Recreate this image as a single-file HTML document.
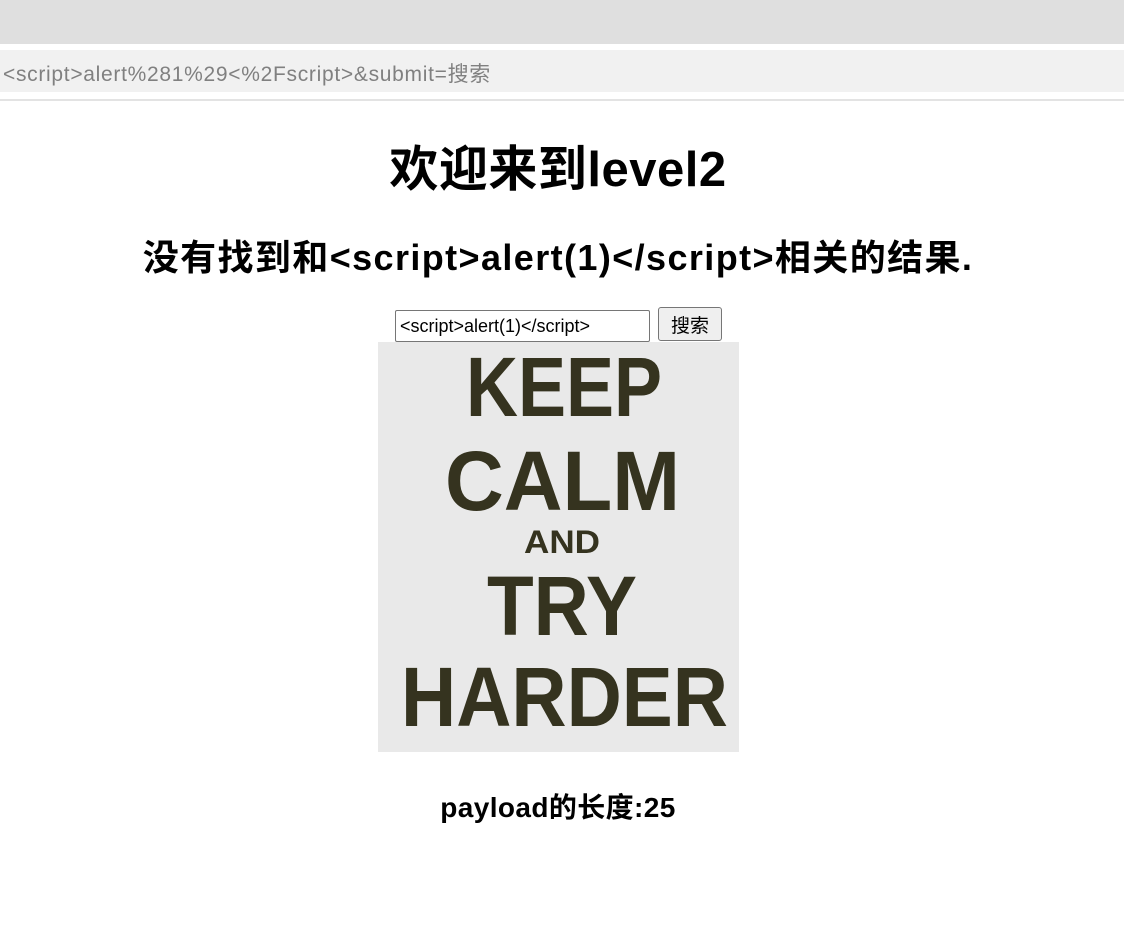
<!DOCTYPE html>
<html><head><meta charset="utf-8"><style>
body{margin:0;width:1124px;height:952px;background:#fff;position:relative;overflow:hidden;font-family:"Liberation Sans","Noto Sans CJK SC",sans-serif}
.a{position:absolute}
</style></head><body>
<div class="a" style="left:0;top:0;width:1124px;height:44px;background:#dfdfdf"></div>
<div class="a" style="left:0;top:50px;width:1124px;height:42px;background:#f1f1f1"></div>
<div class="a" style="left:3px;top:58px;font-size:21px;color:#808080;white-space:nowrap;letter-spacing:0.7px">&lt;script&gt;alert%281%29&lt;%2Fscript&gt;&amp;submit=搜索</div>
<div class="a" style="left:0;top:99px;width:1124px;height:2px;background:#e3e3e3"></div>
<div class="a" style="left:0;top:130px;width:1116px;text-align:center;font-size:49px;font-weight:bold;letter-spacing:0.5px">欢迎来到level2</div>
<div class="a" style="left:0;top:229px;width:1116px;text-align:center;font-size:36px;font-weight:bold;letter-spacing:1.4px;white-space:nowrap">没有找到和&lt;script&gt;alert(1)&lt;/script&gt;相关的结果.</div>
<div class="a" style="left:395px;top:310px;border:1px solid #767676;border-radius:2px;font-size:18px;line-height:30px;padding-left:4px;box-sizing:border-box;width:255px;height:32px">&lt;script&gt;alert(1)&lt;/script&gt;</div>
<div class="a" style="left:658px;top:307px;width:64px;height:34px;border:1px solid #767676;border-radius:3px;background:#efefef;box-sizing:border-box;font-size:19px;text-align:center;line-height:37px">搜索</div>
<svg class="a" style="left:378px;top:342px" width="361" height="410">
<rect width="361" height="410" fill="#e9e9e9"/>
<g fill="#35331f" font-family="Liberation Sans" font-weight="bold">
<text x="88" y="74" font-size="84" textLength="196" lengthAdjust="spacingAndGlyphs">KEEP</text>
<text x="67" y="168" font-size="84" textLength="235" lengthAdjust="spacingAndGlyphs">CALM</text>
<text x="146" y="211" font-size="32" textLength="76" lengthAdjust="spacingAndGlyphs">AND</text>
<text x="109" y="293" font-size="84" textLength="150" lengthAdjust="spacingAndGlyphs">TRY</text>
<text x="23" y="384" font-size="84" textLength="327" lengthAdjust="spacingAndGlyphs">HARDER</text>
</g></svg>
<div class="a" style="left:0;top:786px;width:1116px;text-align:center;font-size:28px;font-weight:bold;letter-spacing:0.4px">payload的长度:25</div>
</body></html>
